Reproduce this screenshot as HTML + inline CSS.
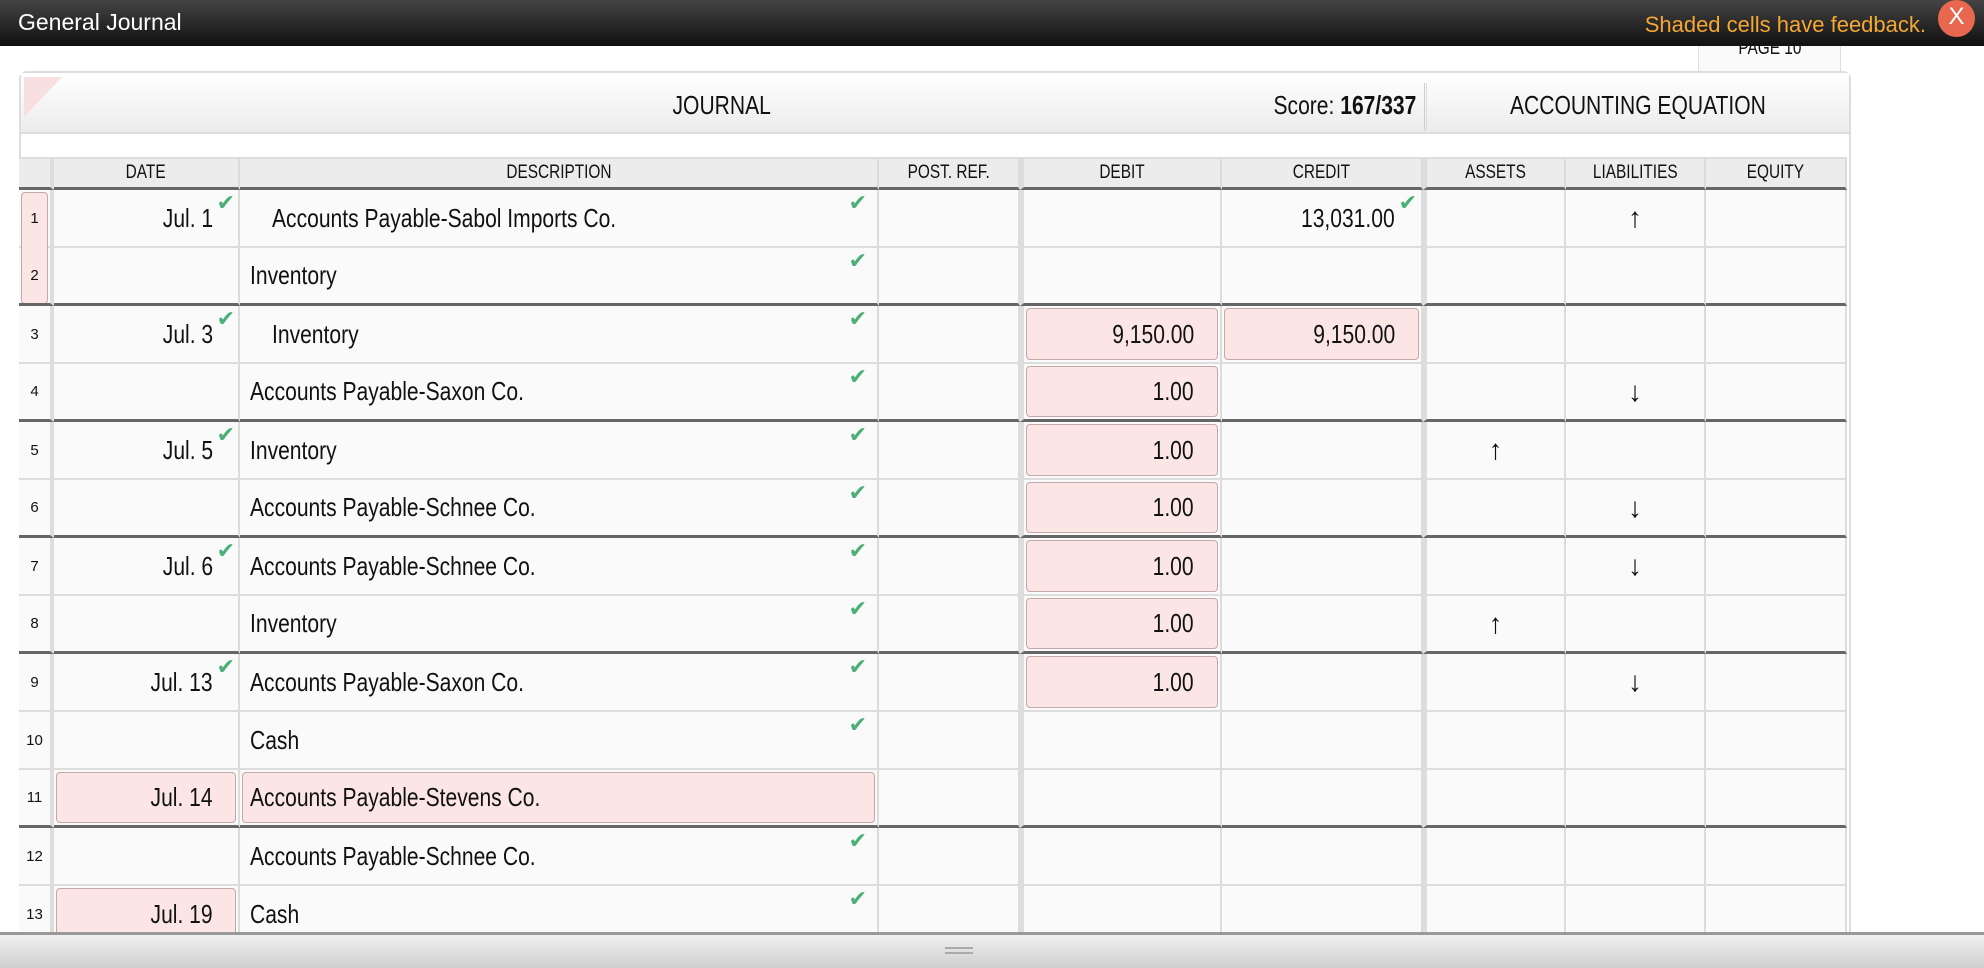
<!DOCTYPE html>
<html><head><meta charset="utf-8"><style>
*{box-sizing:border-box;margin:0;padding:0}
body{width:1984px;height:968px;background:#fff;overflow:hidden;position:relative;font-family:"Liberation Sans",sans-serif;color:#111}
.sl,.sr,.sc{display:inline-block;transform:scaleX(.81)}
.sl{transform-origin:left center}.sr{transform-origin:right center}.sc{transform-origin:center}
#top{position:absolute;left:0;top:0;width:1984px;height:46px;background:linear-gradient(#444,#101010);}
#top .t{position:absolute;left:18px;top:9px;color:#fff;font:23px "Liberation Sans",sans-serif}
#top .f{position:absolute;right:58px;top:12px;color:#f5a733;font:22px "Liberation Sans",sans-serif}
#top .x{position:absolute;left:1938px;top:0;width:37px;height:37px;border-radius:50%;background:#e8674f;color:#fff;font:24px "Liberation Sans",sans-serif;text-align:center;line-height:34px}
#tab{position:absolute;left:1698px;top:46px;width:143px;height:26px;background:#fafafa;border:1px solid #ddd;border-top:none;text-align:center;font-size:19px;line-height:6px;overflow:hidden}
#panel{position:absolute;left:19px;top:71px;width:1832px;height:870px;border:2px solid #ddd;border-radius:8px 8px 0 0;background:#fff}
#title{position:absolute;left:21px;top:73px;width:1828px;height:61px;background:linear-gradient(#fff,#ececec);border-bottom:2px solid #ddd}
.corner{position:absolute;left:24px;top:77px;width:0;height:0;border-top:40px solid #f8e0e0;border-right:38px solid transparent}
#title .j{position:absolute;left:0;width:1402px;top:17px;text-align:center;font-size:26px}
#title .s{position:absolute;right:433px;top:17px;font-size:26px;text-align:right}
#title .sep{position:absolute;left:1403px;top:10px;width:3px;height:48px;border-left:1px solid #ccc;border-right:1px solid #ddd}
#title .a{position:absolute;left:1406px;width:422px;top:17px;text-align:center;font-size:26px}
table{position:absolute;left:19px;top:157px;border-collapse:separate;border-spacing:0;table-layout:fixed;width:1828px;background:#fafafa}
th{height:33px;background:#ececec;font-weight:normal;font-size:19px;border-right:2px solid #dcdcdc;border-top:2px solid #ddd;border-bottom:3px solid #666}
td{height:58px;border-right:2px solid #dcdcdc;border-bottom:2px solid #ddd;position:relative;font-size:26px;white-space:nowrap}
tr.k td{border-bottom:3px solid #666}
.g{border-left:4px solid #ddd}
td.n{font-size:15px;text-align:center}
td.d{text-align:right;padding-right:25px}
td.e{padding-left:10px}
td.e.i{padding-left:32px}
td.m{text-align:right;padding-right:26px}
td.c{text-align:center;font-size:28px}
.p{position:absolute;left:2px;right:2px;top:2px;bottom:2px;background:#fbe5e5;border:1px solid #c6a7a7;border-radius:4px;z-index:0}
.v{position:relative;z-index:1}
.ck{position:absolute;top:1px;color:#4caf78;font-size:22px;font-family:"DejaVu Sans",sans-serif;z-index:2}
#foot{position:absolute;left:0;top:932px;width:1984px;height:36px;background:linear-gradient(#f0f0f0,#cfcfcf);border-top:3px solid #999}
#foot .h{position:absolute;left:945px;top:12px;width:28px;height:7px;border-top:2px solid #aaa;border-bottom:2px solid #aaa}
</style></head><body>
<div id="top"><div class="t">General Journal</div><div class="f">Shaded cells have feedback.</div><div class="x">X</div></div>
<div id="tab"><span class="sc">PAGE 10</span></div>
<div id="panel"></div>
<div id="title"><div class="j"><span class="sc">JOURNAL</span></div><div class="s"><span class="sr">Score: <b>167/337</b></span></div><div class="sep"></div><div class="a"><span class="sc">ACCOUNTING EQUATION</span></div></div>
<div class="corner"></div>
<table>
<colgroup><col style="width:35px"><col style="width:186px"><col style="width:639px"><col style="width:141px"><col style="width:202px"><col style="width:201px"><col style="width:143px"><col style="width:140px"><col style="width:141px"></colgroup>
<tr><th style="border-right:4px solid #ddd"></th><th><span class="sc">DATE</span></th><th><span class="sc">DESCRIPTION</span></th><th><span class="sc">POST. REF.</span></th><th class="g"><span class="sc">DEBIT</span></th><th><span class="sc">CREDIT</span></th><th class="g"><span class="sc">ASSETS</span></th><th><span class="sc">LIABILITIES</span></th><th><span class="sc">EQUITY</span></th></tr>
<tr><td class="n" style="border-right:4px solid #ddd"><div class="p" style="bottom:-58px"></div><span class="v">1</span></td><td class="d"><span class="sr">Jul. 1</span><span class="ck" style="right:3px">✔</span></td><td class="e i"><span class="sl">Accounts Payable-Sabol Imports Co.</span><span class="ck" style="right:10px">✔</span></td><td></td><td class="m g"></td><td class="m"><span class="sr">13,031.00</span><span class="ck" style="right:4px">✔</span></td><td class="c g"></td><td class="c">↑</td><td></td></tr>
<tr class="k"><td class="n" style="border-right:4px solid #ddd"><span class="v">2</span></td><td class="d"></td><td class="e"><span class="sl">Inventory</span><span class="ck" style="right:10px">✔</span></td><td></td><td class="g"></td><td></td><td class="g"></td><td></td><td></td></tr>
<tr><td class="n" style="border-right:4px solid #ddd">3</td><td class="d"><span class="sr">Jul. 3</span><span class="ck" style="right:3px">✔</span></td><td class="e i"><span class="sl">Inventory</span><span class="ck" style="right:10px">✔</span></td><td></td><td class="m g"><div class="p"></div><span class="v sr">9,150.00</span></td><td class="m"><div class="p"></div><span class="v sr">9,150.00</span></td><td class="g"></td><td></td><td></td></tr>
<tr class="k"><td class="n" style="border-right:4px solid #ddd">4</td><td class="d"></td><td class="e"><span class="sl">Accounts Payable-Saxon Co.</span><span class="ck" style="right:10px">✔</span></td><td></td><td class="m g"><div class="p"></div><span class="v sr">1.00</span></td><td></td><td class="c g"></td><td class="c">↓</td><td></td></tr>
<tr><td class="n" style="border-right:4px solid #ddd">5</td><td class="d"><span class="sr">Jul. 5</span><span class="ck" style="right:3px">✔</span></td><td class="e"><span class="sl">Inventory</span><span class="ck" style="right:10px">✔</span></td><td></td><td class="m g"><div class="p"></div><span class="v sr">1.00</span></td><td></td><td class="c g">↑</td><td class="c"></td><td></td></tr>
<tr class="k"><td class="n" style="border-right:4px solid #ddd">6</td><td class="d"></td><td class="e"><span class="sl">Accounts Payable-Schnee Co.</span><span class="ck" style="right:10px">✔</span></td><td></td><td class="m g"><div class="p"></div><span class="v sr">1.00</span></td><td></td><td class="c g"></td><td class="c">↓</td><td></td></tr>
<tr><td class="n" style="border-right:4px solid #ddd">7</td><td class="d"><span class="sr">Jul. 6</span><span class="ck" style="right:3px">✔</span></td><td class="e"><span class="sl">Accounts Payable-Schnee Co.</span><span class="ck" style="right:10px">✔</span></td><td></td><td class="m g"><div class="p"></div><span class="v sr">1.00</span></td><td></td><td class="c g"></td><td class="c">↓</td><td></td></tr>
<tr class="k"><td class="n" style="border-right:4px solid #ddd">8</td><td class="d"></td><td class="e"><span class="sl">Inventory</span><span class="ck" style="right:10px">✔</span></td><td></td><td class="m g"><div class="p"></div><span class="v sr">1.00</span></td><td></td><td class="c g">↑</td><td class="c"></td><td></td></tr>
<tr><td class="n" style="border-right:4px solid #ddd">9</td><td class="d"><span class="sr">Jul. 13</span><span class="ck" style="right:3px">✔</span></td><td class="e"><span class="sl">Accounts Payable-Saxon Co.</span><span class="ck" style="right:10px">✔</span></td><td></td><td class="m g"><div class="p"></div><span class="v sr">1.00</span></td><td></td><td class="c g"></td><td class="c">↓</td><td></td></tr>
<tr><td class="n" style="border-right:4px solid #ddd">10</td><td class="d"></td><td class="e"><span class="sl">Cash</span><span class="ck" style="right:10px">✔</span></td><td></td><td class="g"></td><td></td><td class="g"></td><td></td><td></td></tr>
<tr class="k"><td class="n" style="border-right:4px solid #ddd">11</td><td class="d"><div class="p"></div><span class="v sr">Jul. 14</span></td><td class="e"><div class="p"></div><span class="v sl">Accounts Payable-Stevens Co.</span></td><td></td><td class="g"></td><td></td><td class="g"></td><td></td><td></td></tr>
<tr><td class="n" style="border-right:4px solid #ddd">12</td><td class="d"></td><td class="e"><span class="sl">Accounts Payable-Schnee Co.</span><span class="ck" style="right:10px">✔</span></td><td></td><td class="g"></td><td></td><td class="g"></td><td></td><td></td></tr>
<tr><td class="n" style="border-right:4px solid #ddd">13</td><td class="d"><div class="p"></div><span class="v sr">Jul. 19</span></td><td class="e"><span class="sl">Cash</span><span class="ck" style="right:10px">✔</span></td><td></td><td class="g"></td><td></td><td class="g"></td><td></td><td></td></tr>
</table>
<div id="foot"><div class="h"></div></div>
</body></html>
